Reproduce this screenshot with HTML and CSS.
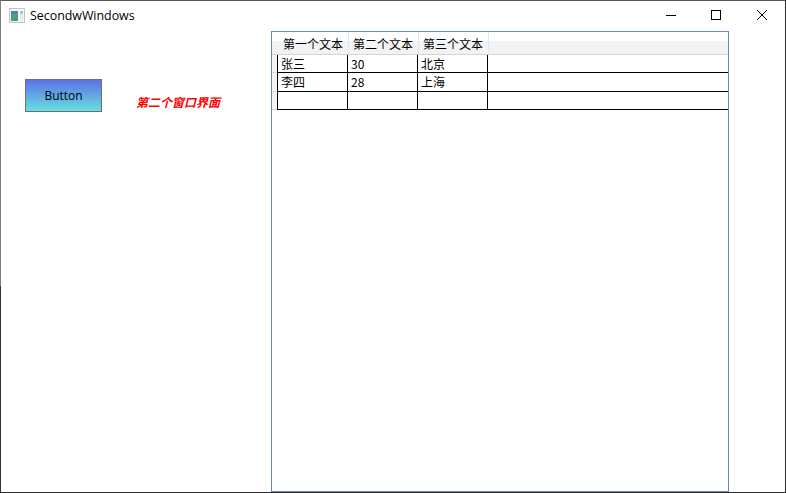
FILE: index.html
```html
<!DOCTYPE html>
<html lang="zh-CN">
<head>
<meta charset="utf-8">
<title>SecondwWindows</title>
<link rel="stylesheet" href="styles.css">
</head>
<body>
<div class="window">
  <header class="titlebar">
    <svg class="app-icon" width="16" height="15" viewBox="0 0 16 15">
      <rect x="0.5" y="0.5" width="15" height="14" fill="#f4f4f4" stroke="#c4c4c4"/>
      <rect x="2" y="3" width="7" height="3" fill="#4f86a8"/>
      <rect x="2" y="6" width="7" height="3" fill="#5c9490"/>
      <rect x="2" y="9" width="7" height="4" fill="#4f9a78"/>
      <rect x="10" y="3" width="1" height="10" fill="#ffffff"/>
      <rect x="11" y="3" width="3" height="3" fill="#a9c9bc"/>
      <rect x="11" y="6" width="3" height="7" fill="#e6e9e9"/>
    </svg>
    <span class="title">SecondwWindows</span>
    <div class="caption-buttons">
      <div class="caption-btn">
        <svg width="12" height="12" viewBox="0 0 12 12"><path d="M2 6.5H12" stroke="#000" fill="none"/></svg>
      </div>
      <div class="caption-btn">
        <svg width="12" height="12" viewBox="0 0 12 12"><rect x="1.5" y="1.5" width="9" height="9" stroke="#000" fill="none"/></svg>
      </div>
      <div class="caption-btn">
        <svg width="12" height="12" viewBox="0 0 12 12"><path d="M1 1L11 11M11 1L1 11" stroke="#000" fill="none"/></svg>
      </div>
    </div>
  </header>
  <main class="content">
    <section class="left-pane">
      <button class="action-btn" type="button">Button</button>
      <span class="caption-label">第二个窗口界面</span>
    </section>
    <section class="grid">
      <div class="row head">
        <div class="gutter"></div>
        <div class="hcell">第一个文本</div>
        <div class="hcell">第二个文本</div>
        <div class="hcell">第三个文本</div>
        <div class="hfill"></div>
      </div>
      <div class="row r1">
        <div class="gutter"></div>
        <div class="cells">
          <div class="cell">张三</div>
          <div class="cell">30</div>
          <div class="cell">北京</div>
          <div class="fill"></div>
        </div>
      </div>
      <div class="row r2">
        <div class="gutter"></div>
        <div class="cells">
          <div class="cell">李四</div>
          <div class="cell">28</div>
          <div class="cell">上海</div>
          <div class="fill"></div>
        </div>
      </div>
      <div class="row r3">
        <div class="gutter"></div>
        <div class="cells">
          <div class="cell"></div>
          <div class="cell"></div>
          <div class="cell"></div>
          <div class="fill"></div>
        </div>
      </div>
    </section>
  </main>
</div>
</body>
</html>
```
FILE: styles.css
```css
* { box-sizing: border-box; }
html, body { margin: 0; padding: 0; background: #fff; }
body {
  width: 786px;
  height: 493px;
  overflow: hidden;
  font-family: "Noto Sans", "Noto Sans CJK SC", sans-serif;
  color: #000;
}
.window {
  position: relative;
  width: 786px;
  height: 493px;
  display: flex;
  flex-direction: column;
  background: #fff;
  border: 1px solid #2b2b2b;
  border-top-color: #5a5a5a;
  border-left-color: #7f7f7f;
}
.window::before {
  content: "";
  position: absolute;
  left: -1px;
  top: 285px;
  bottom: -1px;
  width: 1px;
  background: #333;
}
.titlebar {
  height: 30px;
  display: flex;
  align-items: flex-start;
  padding-left: 8px;
  flex: none;
}
.app-icon { flex: none; margin-top: 7px; }
.title {
  margin-left: 5px;
  margin-top: 6px;
  font-family: "Open Sans", "Noto Sans", sans-serif;
  font-size: 12.4px;
  line-height: 18px;
  color: #000;
}
.caption-buttons { margin-left: auto; display: flex; }
.caption-btn {
  width: 46px;
  height: 28px;
  display: flex;
  align-items: center;
  justify-content: center;
}
.content {
  flex: 1;
  display: flex;
  min-height: 0;
}
.left-pane {
  width: 270px;
  flex: none;
  display: flex;
  align-items: flex-start;
  padding: 48px 0 0 24px;
}
.action-btn {
  width: 77px;
  height: 33px;
  padding: 0;
  border: 1px solid #707070;
  background: linear-gradient(#5b72e6, #68dfdf);
  font-family: "Open Sans", "Noto Sans", sans-serif;
  font-size: 12px;
  color: #000;
  flex: none;
}
.caption-label {
  margin: 15px 0 0 34px;
  font-family: "Noto Sans CJK SC", sans-serif;
  font-size: 12px;
  line-height: 16px;
  font-weight: 700;
  font-style: italic;
  color: #f00;
  white-space: nowrap;
}
.grid {
  width: 458px;
  flex: none;
  height: 461px;
  border: 1px solid #688caf;
  display: flex;
  flex-direction: column;
  font-family: "Noto Sans CJK SC", sans-serif;
  font-size: 12px;
  background: #fff;
}
.row { display: flex; flex: none; }
.head {
  height: 23px;
  background: linear-gradient(#fff 0, #fff 39%, #f3f4f6 39%, #f1f2f4 100%);
  border-bottom: 1px solid #d5d5d5;
}
.head .gutter { width: 6px; background: none; border-bottom: 0; }
.gutter {
  width: 5px;
  flex: none;
  background: #f4f5f7;
  border-bottom: 1px solid #dedede;
}
.hcell {
  width: 70px;
  flex: none;
  padding-left: 5px;
  line-height: 23px;
  white-space: nowrap;
  box-shadow: 1px 0 0 #e4e6ea;
}
.hfill { flex: 1; }
.cells {
  flex: 1;
  display: flex;
  border-left: 1px solid #000;
  border-bottom: 1px solid #000;
}
.r1 { height: 18px; }
.r2 { height: 19px; }
.r3 { height: 18px; }
.cell {
  width: 70px;
  flex: none;
  padding-left: 3px;
  line-height: 18px;
  border-right: 1px solid #000;
  white-space: nowrap;
}
.fill { flex: 1; }
```
